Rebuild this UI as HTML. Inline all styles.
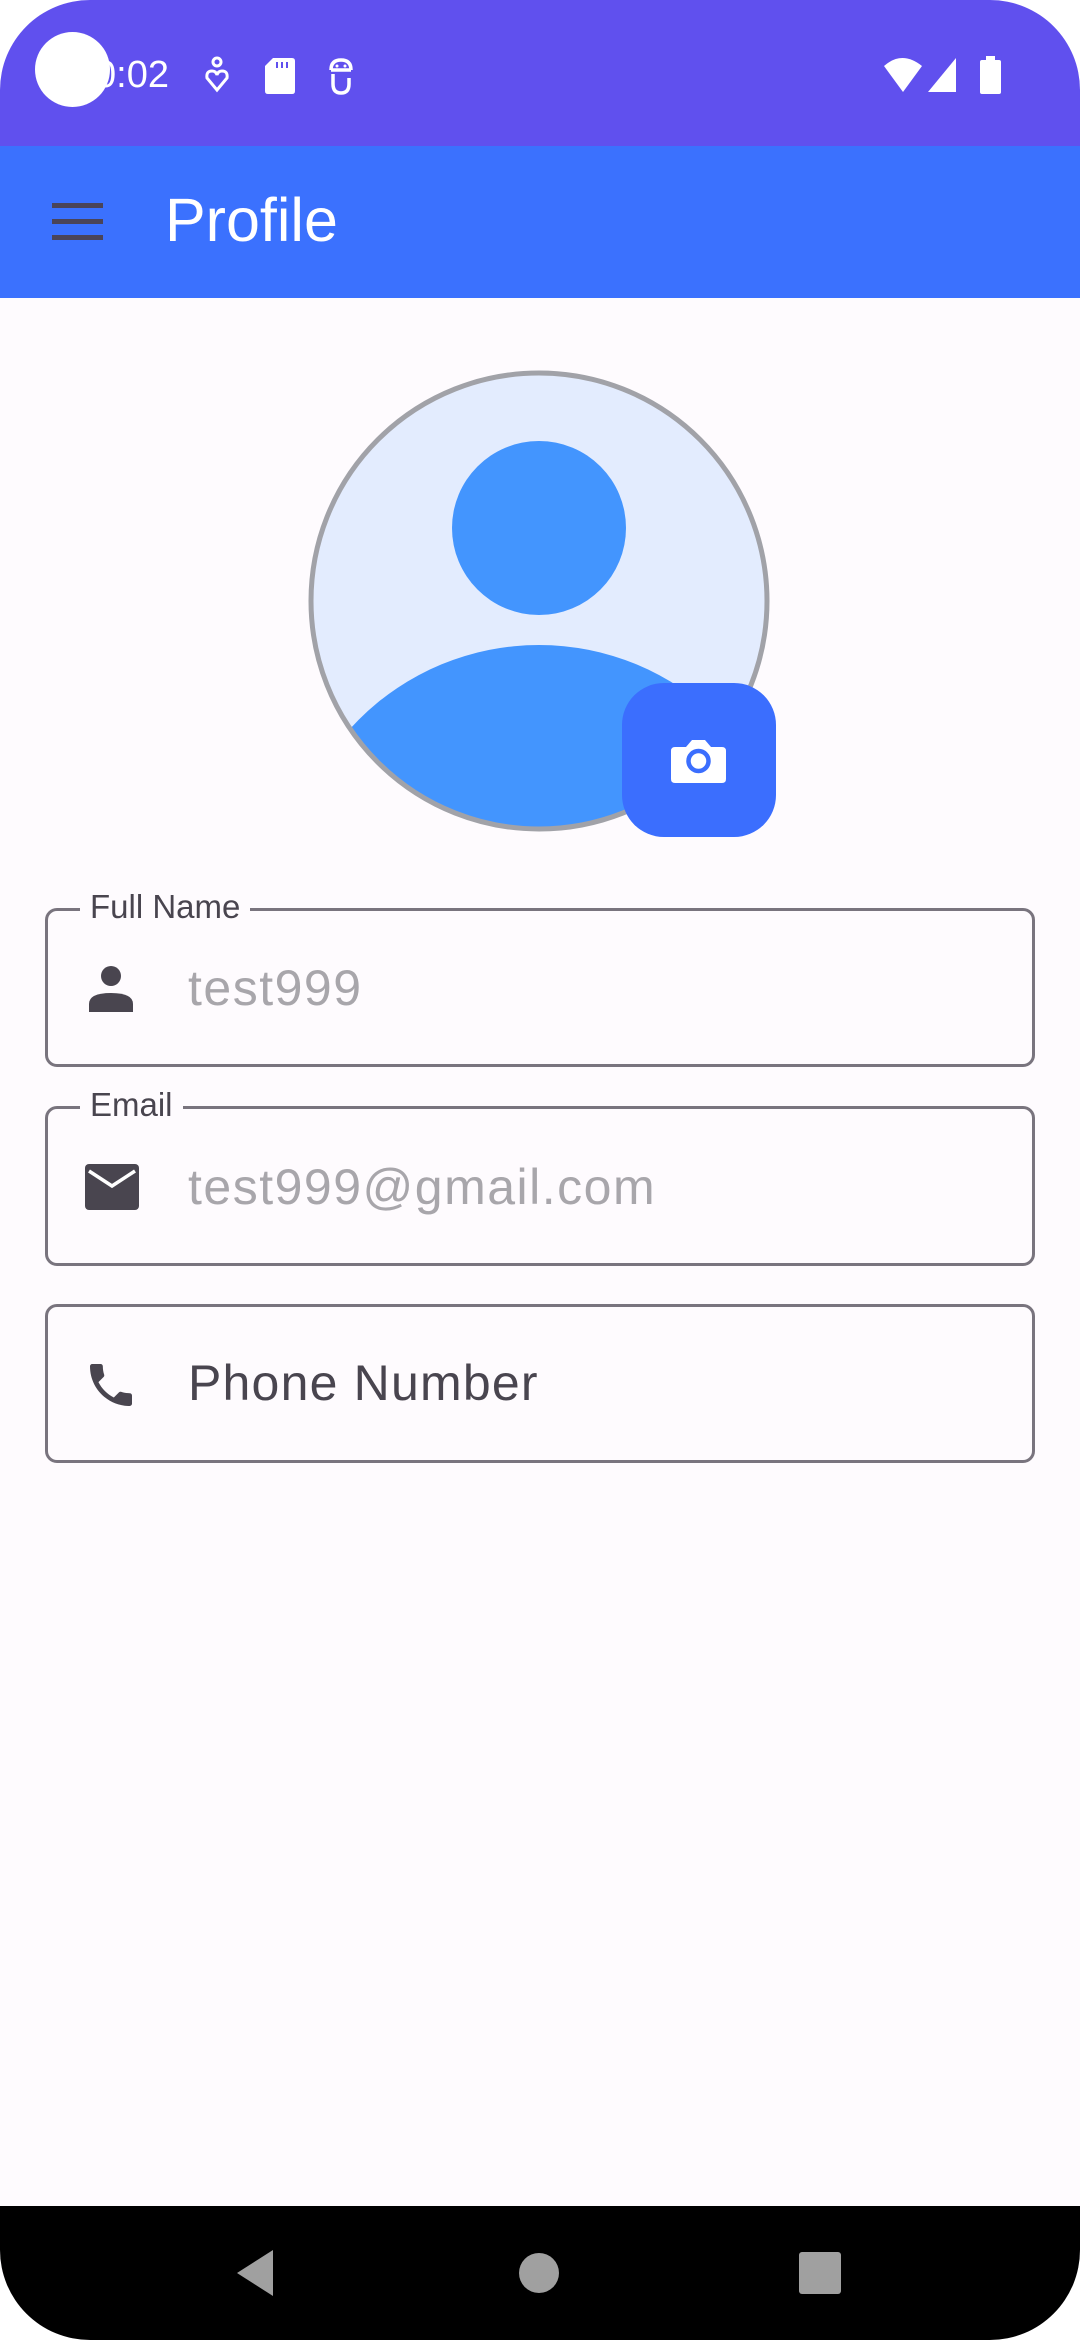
<!DOCTYPE html>
<html><head><meta charset="utf-8">
<style>
*{margin:0;padding:0;box-sizing:border-box}
html,body{width:1080px;height:2340px;overflow:hidden;background:#fff}
body{font-family:"Liberation Sans",sans-serif;position:relative}
.screen{position:absolute;left:0;top:0;width:1080px;height:2340px;background:#FEFBFE;border-radius:90px;overflow:hidden}
.status{position:absolute;left:0;top:0;width:1080px;height:146px;background:#6050EE}
.appbar{position:absolute;left:0;top:146px;width:1080px;height:152px;background:#3B71FE}
.title{position:absolute;left:165px;top:185px;font-size:61px;color:#fff;line-height:70px}
.ham{position:absolute;left:52px;width:51px;height:5px;background:#4A4458}
.field{position:absolute;left:45px;width:990px;border:3px solid #79747E;border-radius:12px}
.label{position:absolute;left:32px;top:-25px;background:#FEFBFE;padding:0 10px;font-size:33px;color:#49454F;line-height:42px}
.val{position:absolute;left:140px;font-size:50px;line-height:56px;letter-spacing:1.5px}
.nav{position:absolute;left:0;top:2206px;width:1080px;height:134px;background:#000}
</style></head><body>
<div class="screen">
<div class="status"></div>
<div style="position:absolute;left:35px;top:32px;width:75px;height:75px;border-radius:50%;background:#fff"></div>
<div style="position:absolute;left:95px;top:52px;font-size:38px;color:#fff;line-height:46px">0:02</div>
<svg style="position:absolute;left:200px;top:56px" width="40" height="40" viewBox="0 0 40 40"><circle cx="17" cy="6" r="4" fill="none" stroke="#fff" stroke-width="3"/><path d="M17 34 L7 22 Q6 15 12 15 Q16 15 17 19 Q18 15 22 15 Q28 15 27 22 Z" fill="none" stroke="#fff" stroke-width="3"/></svg>
<svg style="position:absolute;left:265px;top:58px" width="30" height="36" viewBox="0 0 30 36"><path d="M8 0 H27 Q30 0 30 3 V33 Q30 36 27 36 H3 Q0 36 0 33 V8 Z" fill="#fff"/><rect x="11" y="4" width="2" height="6" fill="#6050EE"/><rect x="16" y="4" width="2" height="6" fill="#6050EE"/><rect x="21" y="4" width="2" height="6" fill="#6050EE"/></svg>
<svg style="position:absolute;left:325px;top:56px" width="32" height="40" viewBox="0 0 32 40"><path d="M6 14 Q6 4 16 4 Q26 4 26 14 M6 14 H26 M8 18 V28 Q8 37 16 37 Q24 37 24 28 V22" fill="none" stroke="#fff" stroke-width="3.5"/><circle cx="12" cy="10" r="1.5" fill="#fff"/><circle cx="20" cy="10" r="1.5" fill="#fff"/></svg>
<svg style="position:absolute;left:882px;top:56px" width="120" height="38" viewBox="0 0 120 38"><path d="M2 10 Q20 -6 40 10 L21 36 Z" fill="#fff"/><path d="M46 36 L74 2 V36 Z" fill="#fff"/><rect x="98" y="4" width="21" height="34" rx="2" fill="#fff"/><rect x="104" y="0" width="9" height="5" fill="#fff"/></svg>
<div class="appbar"></div>
<div class="ham" style="top:203px"></div><div class="ham" style="top:219px"></div><div class="ham" style="top:235px"></div>
<div class="title">Profile</div>

<svg style="position:absolute;left:300px;top:360px" width="490" height="490" viewBox="300 360 490 490">
<defs><clipPath id="c"><circle cx="539" cy="601" r="227"/></clipPath></defs>
<circle cx="539" cy="601" r="227" fill="#E3ECFE"/>
<circle cx="539" cy="528" r="87" fill="#4395FE"/>
<circle cx="539" cy="900" r="255" fill="#4395FE" clip-path="url(#c)"/>
<circle cx="539" cy="601" r="228" fill="none" stroke="#A1A2A8" stroke-width="5"/>
<rect x="622" y="683" width="154" height="154" rx="42" fill="#3B6EFE"/>
<path d="M675 747 H686 L692 740 H705 L711 747 H722 Q726 747 726 751 V779 Q726 783 722 783 H675 Q671 783 671 779 V751 Q671 747 675 747 Z" fill="#fff"/>
<circle cx="698.5" cy="761" r="10" fill="none" stroke="#3B6EFE" stroke-width="4.5"/>
</svg>

<div class="field" style="top:908px;height:159px">
 <div class="label">Full Name</div>
 <svg style="position:absolute;left:38px;top:53px" width="50" height="50" viewBox="0 0 50 50"><circle cx="25" cy="12" r="10" fill="#49454F"/><path d="M3 48 V40 Q3 29 25 29 Q47 29 47 40 V48 Z" fill="#49454F"/></svg>
 <div class="val" style="top:49px;color:#A8A6AB">test999</div>
</div>
<div class="field" style="top:1106px;height:160px">
 <div class="label">Email</div>
 <svg style="position:absolute;left:35px;top:53px" width="58" height="50" viewBox="0 0 58 50"><rect x="2" y="2" width="54" height="46" rx="4" fill="#49454F"/><path d="M6 9 L29 24 L52 9" fill="none" stroke="#fff" stroke-width="3.5"/></svg>
 <div class="val" style="top:50px;color:#A8A6AB">test999@gmail.com</div>
</div>
<div class="field" style="top:1304px;height:159px">
 <svg style="position:absolute;left:35px;top:50px" width="56" height="56" viewBox="0 0 24 24"><path fill="#49454F" d="M6.62 10.79c1.44 2.83 3.76 5.14 6.59 6.59l2.2-2.2c.27-.27.67-.36 1.02-.24 1.120.37 2.33.57 3.57.57.55 0 1 .45 1 1V20c0 .55-.45 1-1 1-9.39 0-17-7.61-17-17 0-.55.45-1 1-1h3.5c.55 0 1 .45 1 1 0 1.25.2 2.45.57 3.57.11.35.03.74-.25 1.02l-2.2 2.2z"/></svg>
 <div class="val" style="top:48px;color:#49454F;letter-spacing:1.2px">Phone Number</div>
</div>

<div class="nav"></div>
<svg style="position:absolute;left:0;top:2206px" width="1080" height="134"><path d="M237 67 L273 44 V90 Z" fill="#A0A0A0"/><circle cx="539" cy="67" r="20" fill="#A0A0A0"/><rect x="799" y="46" width="42" height="42" rx="3" fill="#A0A0A0"/></svg>
</div>
</body></html>
